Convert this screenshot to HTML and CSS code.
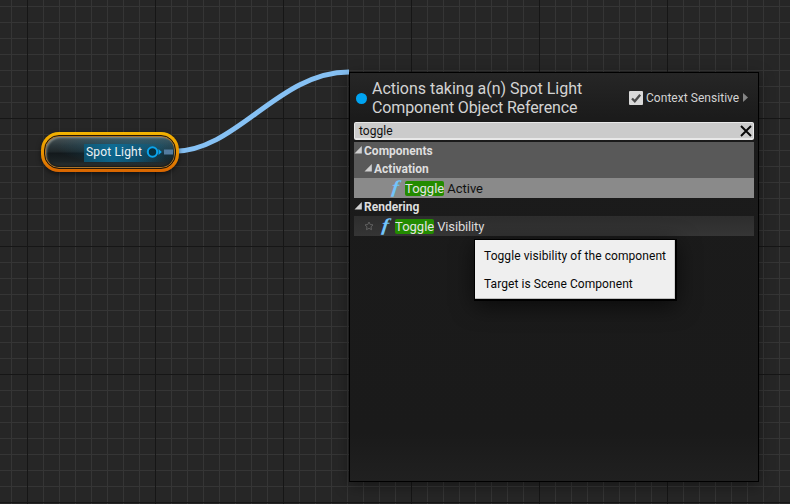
FILE: index.html
```
<!DOCTYPE html>
<html lang="en">
<head>
<meta charset="utf-8">
<title>Blueprint graph</title>
<link rel="stylesheet" href="styles.css">
</head>
<body>
<main class="graph">
  <svg class="wire" width="790" height="504" viewBox="0 0 790 504"><path d="M173 151.500C237 151.500 278 72 349 72" fill="none" stroke="#86c1f4" stroke-width="5"/></svg>
  <div class="node">
    <div class="node-body"><span class="node-name">Spot Light</span>
      <svg class="pin" width="28" height="16" viewBox="0 0 28 16"><circle cx="7.500" cy="8" r="4.700" fill="#08303f" stroke="#0ba4ec" stroke-width="2"/><path d="M13.500 5L16.800 8L13.500 11Z" fill="#0ba4ec"/><path d="M19 5.500H28V10.500H19Z" fill="#537b9f"/></svg>
    </div>
  </div>
  <section class="menu">
    <header class="head">
      <span class="dot"></span>
      <h1 class="title">Actions taking a(n) Spot Light<br><span class="t2">Component Object Reference</span></h1>
      <div class="context">
        <svg class="check" width="14" height="14" viewBox="0 0 14 14"><rect width="14" height="14" rx="1" fill="#dadada"/><path d="M3 7.500L5.800 10.300L11.200 3.700" fill="none" stroke="#4b4b4b" stroke-width="2.300"/></svg>
        <span class="context-label">Context Sensitive</span>
        <svg class="arrow" width="5" height="9" viewBox="0 0 5 9"><path d="M0 0L5 4.500L0 9Z" fill="#858585"/></svg>
      </div>
    </header>
    <div class="search"><span class="query">toggle</span><svg width="12" height="12" viewBox="0 0 12 12"><path d="M1 1L11 11M11 1L1 11" stroke="#080808" stroke-width="1.900"/></svg></div>
    <div class="list">
      <div class="row group"><svg class="tri" width="8" height="8" viewBox="0 0 8 8"><path d="M7.800 0V7.500H.5Z" fill="#d0d0d0"/></svg><b>Components</b></div>
      <div class="row group sub"><svg class="tri" width="8" height="8" viewBox="0 0 8 8"><path d="M7.800 0V7.500H.5Z" fill="#d0d0d0"/></svg><b>Activation</b></div>
      <div class="row item selected"><i class="fn">f</i><mark>Toggle</mark><span class="rest">Active</span></div>
      <div class="row category"><svg class="tri" width="8" height="8" viewBox="0 0 8 8"><path d="M7.800 0V7.500H.5Z" fill="#d0d0d0"/></svg><b>Rendering</b></div>
      <div class="row item hovered"><svg class="star" width="10" height="10" viewBox="0 0 10 10"><path d="M5 1L6.200 3.500L9 3.900L7 5.800L7.500 8.700L5 7.300L2.500 8.700L3 5.800L1 3.900L3.800 3.500Z" fill="none" stroke="#606060"/></svg><i class="fn">f</i><mark>Toggle</mark><span class="rest visibility">Visibility</span></div>
    </div>
  </section>
  <aside class="tooltip"><p>Toggle visibility of the component</p><p>Target is Scene Component</p></aside>
</main>
</body>
</html>
```
FILE: styles.css
```
* { box-sizing: border-box; }
body { margin: 0; font: 12px/18px Roboto, sans-serif; }
.graph {
  position: relative; width: 790px; height: 504px; overflow: hidden;
  background:
    repeating-linear-gradient(to right, #161616 0 1px, transparent 1px 128px) 27px 0 / 128px 100%,
    repeating-linear-gradient(to bottom, #161616 0 1px, transparent 1px 128px) 0 118px / 100% 128px,
    repeating-linear-gradient(to right, #353535 0 1px, transparent 1px 16px) 11px 0 / 16px 100%,
    repeating-linear-gradient(to bottom, #353535 0 1px, transparent 1px 16px) 0 6px / 100% 16px,
    #262626;
}
.wire { position: absolute; left: 0; top: 0; }
.node {
  position: absolute; left: 41px; top: 132px; width: 138px; height: 40px;
  padding: 3px; border-radius: 18px;
  background: linear-gradient(#f4b400, #e99300 50%, #d96500);
  box-shadow: 0 2px 5px #0008;
}
.node-body {
  height: 34px; border-radius: 15px; border: 1px solid #211509;
  box-shadow: inset 0 0 0 1px #a9742a, inset 2px 2px 2px #c7c9bd77, inset 0 -2px 2px #0009;
  display: flex; align-items: center; justify-content: flex-end; padding-right: 2px;
  background:
    linear-gradient(90deg, #0a5d7fcc, #0973a1cc 35%, #0a5f86aa 65%, transparent) 39px 8px / 82px 18px no-repeat,
    radial-gradient(ellipse at 70% 35%, #1687b666, transparent 62%),
    linear-gradient(#4b585c, #2b373b 30%, #20282b 48%, #13191c 54%, #1c2325 80%, #343836);
  color: #eef2f4;
}
.node-name { white-space: nowrap; letter-spacing: .17px; }
.pin { margin: 0 0 0 3px; flex: none; }
.menu {
  position: absolute; left: 349px; top: 72px; width: 410px; height: 410px;
  border: 1px solid #000; padding: 0 4px;
  background: linear-gradient(#262626, #1b1b1b 45px, #1a1a1a 360px, #202020);
  box-shadow: 0 4px 14px #0006;
}
.head { height: 49px; display: flex; align-items: center; color: #d3d3d3; }
.dot { width: 11px; height: 11px; border-radius: 50%; background: #00a4f2; margin: 2px 5px 0 2px; }
.title { margin: 0; width: 257px; font-size: 16px; font-weight: 400; line-height: 19px; white-space: nowrap; letter-spacing: -.02px; }
.t2 { letter-spacing: -.12px; }
.context { display: flex; align-items: center; white-space: nowrap; }
.context-label { letter-spacing: .04px; }
.check { margin-right: 3px; }
.arrow { margin-left: 4px; }
.search {
  height: 18px; border: 1px solid #e8e8e8; border-bottom-width: 2px; border-radius: 2px; background: #cbcbcb; color: #101010;
  display: flex; align-items: center; justify-content: space-between; padding: 0 1px 0 4px;
}
.query { letter-spacing: .05px; }
.list { padding-top: 2px; color: #dedede; }
.row { height: 18px; display: flex; align-items: center; }
.tri { margin: 0 2px 2px 0; }
.group { background: #595959; }
.sub { padding-left: 10px; }
.item { height: 20px; font-size: 13px; }
.selected { background: #8a8a8a; padding-left: 35px; color: #111; }
.hovered { background: linear-gradient(#2d2d2d, #353535); padding-left: 10px; }
.star { margin-right: 5px; }
.fn {
  width: 16px; flex: none; text-align: center;
  font: italic bold 18px/20px "Liberation Serif", serif; color: #72c4fb;
  transform: translate(-1.5px, -1.5px) scaleX(1.2) skewX(-5deg);
}
mark { background: #238b00; color: #e3e3e3; height: 15px; line-height: 15px; border-radius: 2px; margin-right: 3px; }
.rest { padding-top: 1px; }
.visibility { letter-spacing: -.15px; }
.tooltip {
  position: absolute; left: 474px; top: 239px; width: 203px; height: 62px;
  border: 1px solid #000; border-right-width: 2px; border-bottom-width: 2px;
  background: #efefef; color: #080808; padding: 7px 9px;
  box-shadow: inset 0 -1px #bdbdbd, inset -1px 0 #d0d0d0, 0 5px 22px #0009;
}
.tooltip p { margin: 0 0 10px; white-space: nowrap; letter-spacing: .07px; }
```
